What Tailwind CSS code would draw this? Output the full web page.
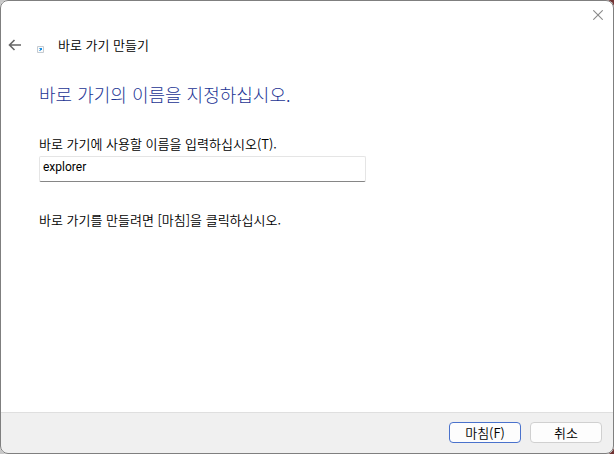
<!DOCTYPE html>
<html lang="ko">

<head>
    <meta charset="UTF-8">
    <meta name="viewport" content="width=device-width, initial-scale=1.0">
    <title>바로 가기 만들기</title>
    <script src="https://cdn.jsdelivr.net/npm/@tailwindcss/browser@4"></script>
</head>

<body class="bg-linear-to-r from-[#c8c8c8] from-50% to-[#703434] to-50% font-['Noto_Sans_CJK_KR',sans-serif] text-[13px] leading-5 font-[350] text-black">
    <form class="flex min-h-screen flex-col overflow-hidden rounded-lg bg-white outline-1 -outline-offset-1 outline-[#7f7f7f]">
        <!-- Title bar -->
        <div class="flex h-[30px] justify-end pr-2">
            <button type="button" aria-label="닫기" class="flex w-4 items-center justify-center text-[#8a8a8a]">
                <svg class="size-[10px]" viewBox="0 0 10 10" fill="none" stroke="currentColor" stroke-width="1.1">
                    <path d="M.3.3l9.4 9.4M9.7.3L.3 9.7" />
                </svg>
            </button>
        </div>

        <header class="flex h-[30px] items-center pl-2">
            <button type="button" aria-label="뒤로" class="text-[#666]">
                <svg class="h-3 w-[14px]" viewBox="0 0 14 12" fill="none" stroke="currentColor" stroke-width="1.6">
                    <path d="M6.5 1L1.5 6l5 5M1.5 6H13" />
                </svg>
            </button>
            <svg class="mt-2 ml-[15px] size-[7px]" viewBox="0 0 7 7">
                <path fill="#fbfbfb" stroke="#c4cad0" d="M.5.5h6v6h-6z" />
                <path fill="#1d8fe0" d="M3 2h2v2H3z" />
                <path fill="#74bdf0" d="M2 4h2v1H2zM2 2h1v1H2z" />
            </svg>
            <h1 class="ml-[14px] font-[350]">바로 가기 만들기</h1>
        </header>

        <main class="flex-1 px-[39px] pt-5">
            <h2 class="text-lg leading-7 font-light text-[#1c3494]">바로 가기의 이름을 지정하십시오.</h2>
            <label for="name" class="mt-[26px] block">바로 가기에 사용할 이름을 입력하십시오(<span>T</span>).</label>
            <input type="text" id="name" value="explorer" accesskey="t"
                class="mt-0.5 block h-[26px] w-full max-w-[327px] rounded-xs border border-[#e5e5e5] border-b-[#868686] bg-white px-[3px] pb-1 font-['Roboto',sans-serif] text-xs font-normal focus:outline-none" />
            <p class="mt-7">바로 가기를 만들려면 [마침]을 클릭하십시오.</p>
        </main>

        <footer class="flex h-[42px] justify-end gap-[9px] border-t border-[#dfdfdf] bg-[#f0f0f0] pt-[9px] pr-3">
            <button type="submit" accesskey="f"
                class="h-[21px] w-18 rounded border border-[#4a72cc] bg-[#fdfdfd] leading-[18px]">마침(F)</button>
            <button type="button"
                class="h-[21px] w-18 rounded border border-[#d0d0d0] bg-[#fdfdfd] leading-[18px]">취소</button>
        </footer>
    </form>
</body>

</html>
